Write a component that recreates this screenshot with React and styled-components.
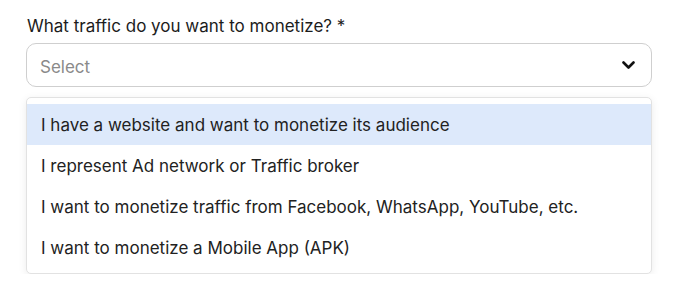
import React, { useState } from 'react';
import styled, { createGlobalStyle } from 'styled-components';

const GlobalStyle = createGlobalStyle`
  body {
    margin: 0;
    background: #ffffff;
    font-family: 'Inter', 'Liberation Sans', sans-serif;
  }
`;

const options = [
  'I have a website and want to monetize its audience',
  'I represent Ad network or Traffic broker',
  'I want to monetize traffic from Facebook, WhatsApp, YouTube, etc.',
  'I want to monetize a Mobile App (APK)',
];

const App = () => {
  const [hovered, setHovered] = useState(0);

  return (
    <>
      <GlobalStyle />
      <Field>
        <Label>What traffic do you want to monetize? *</Label>
        <SelectBox>
          <Placeholder>Select</Placeholder>
          <svg width="13" height="9" viewBox="0 0 13 9" fill="none">
            <path d="M1.5 1.5L6.5 6.5L11.5 1.5" stroke="#111" strokeWidth="2.6" strokeLinecap="round" strokeLinejoin="round" />
          </svg>
        </SelectBox>
        <Menu>
          {options.map((opt, i) => (
            <Option key={i} active={hovered === i} onMouseEnter={() => setHovered(i)}>
              {opt}
            </Option>
          ))}
        </Menu>
      </Field>
    </>
  );
};

const Field = styled.div`
  display: flex;
  flex-direction: column;
  width: 626px;
  padding: 16px 0 0 26px;
`;

const Label = styled.div`
  font-size: 17px;
  line-height: 21px;
  color: #1c1c1c;
  padding-left: 1px;
  margin-bottom: 6px;
`;

const SelectBox = styled.div`
  display: flex;
  align-items: center;
  justify-content: space-between;
  height: 44px;
  box-sizing: border-box;
  border: 1px solid #cfcfcf;
  border-radius: 10px;
  padding: 0 16px 0 13px;
  cursor: pointer;
`;

const Placeholder = styled.span`
  font-size: 17px;
  color: #8a8a8a;
  padding-top: 3px;
`;

const Menu = styled.div`
  margin-top: 10px;
  display: flex;
  flex-direction: column;
  padding: 6px 0 5px;
  border: 1px solid #e2e2e2;
  border-radius: 5px;
  box-shadow: 0 2px 8px rgba(0, 0, 0, 0.08);
  background: #ffffff;
`;

const Option = styled.div`
  height: 41px;
  display: flex;
  align-items: center;
  padding-left: 14px;
  font-size: 17px;
  color: #222222;
  background: ${props => (props.active ? '#dde9fb' : 'transparent')};
  cursor: pointer;
`;

export default App;
